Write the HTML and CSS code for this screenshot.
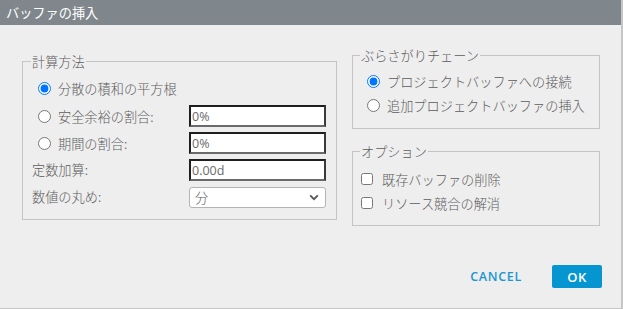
FILE: index.html
```html
<!DOCTYPE html>
<html lang="ja">
<head>
<meta charset="UTF-8" />
<meta name="viewport" content="width=device-width, initial-scale=1" />
<title>バッファの挿入</title>
<link rel="stylesheet" href="styles.css">
</head>
<body>
<div class="dialog" role="dialog" aria-label="バッファの挿入">
  <header class="dialog-title">バッファの挿入</header>

  <div class="dialog-body">
    <div class="col col-left">
      <fieldset class="group">
        <legend>計算方法</legend>
        <div class="rows">
          <label class="row row-first">
            <input type="radio" name="calc" checked>
            <span>分散の積和の平方根</span>
          </label>
          <div class="row">
            <label class="opt"><input type="radio" name="calc"><span>安全余裕の割合:</span></label>
            <input class="field" type="text" value="0%">
          </div>
          <div class="row">
            <label class="opt"><input type="radio" name="calc"><span>期間の割合:</span></label>
            <input class="field" type="text" value="0%">
          </div>
          <div class="row">
            <span class="plain">定数加算:</span>
            <input class="field" type="text" value="0.00d">
          </div>
          <div class="row">
            <span class="plain">数値の丸め:</span>
            <div class="select" role="combobox" aria-expanded="false">
              <span>分</span>
              <svg width="10" height="7" viewBox="0 0 10 7" aria-hidden="true">
                <path d="M1.2 1.4 L5 5.2 L8.8 1.4" fill="none" stroke="#555" stroke-width="1.8"/>
              </svg>
            </div>
          </div>
        </div>
      </fieldset>
    </div>

    <div class="col col-right">
      <fieldset class="group group-chain">
        <legend>ぶらさがりチェーン</legend>
        <div class="rows rows-tight">
          <label class="row opt"><input type="radio" name="chain" checked><span>プロジェクトバッファへの接続</span></label>
          <label class="row opt"><input type="radio" name="chain"><span>追加プロジェクトバッファの挿入</span></label>
        </div>
      </fieldset>

      <fieldset class="group group-options">
        <legend>オプション</legend>
        <div class="rows rows-tight">
          <label class="row opt"><input type="checkbox"><span>既存バッファの削除</span></label>
          <label class="row opt"><input type="checkbox"><span>リソース競合の解消</span></label>
        </div>
      </fieldset>
    </div>
  </div>

  <footer class="dialog-actions">
    <button type="button" class="btn-text">CANCEL</button>
    <button type="button" class="btn-primary">OK</button>
  </footer>
</div>
</body>
</html>
```

FILE: styles.css
```css
/* Base */
* {
  box-sizing: border-box;
}
html, body {
  margin: 0;
  padding: 0;
  height: 100%;
}
body {
  background: #c6c6c6;
  font-family: "Noto Sans CJK JP", sans-serif;
  font-weight: 300;
  font-size: 13.2px;
  color: #5c5c5c;
  overflow: hidden;
}

/* Dialog shell */
.dialog {
  width: 621px;
  height: 308px;
  background: #eeeeee;
  display: flex;
  flex-direction: column;
}
.dialog-title {
  height: 25px;
  background: #7f878c;
  color: #fff;
  font-size: 13.2px;
  font-weight: 400;
  line-height: 25px;
  padding: 0 6px;
}

/* Two columns */
.dialog-body {
  display: grid;
  grid-template-columns: 315px 248px;
  gap: 15px;
  padding: 22px 0 0 22px;
}
.col-left {
  padding-top: 6px;
}
.col-right {
  display: flex;
  flex-direction: column;
  gap: 14px;
}

/* Group boxes */
.group {
  margin: 0;
  border: 1px solid #c4c4c4;
  padding: 7px 9px 11px 9px;
  min-width: 0;
}
.group legend {
  padding: 0 1px;
  margin-left: -1px;
  line-height: 17px;
}
.group-chain,
.group-options {
  padding: 6px 8px 12px 8px;
}
.group-options {
  padding-top: 8px;
  padding-bottom: 11px;
}

.rows {
  display: flex;
  flex-direction: column;
  gap: 5px;
}
.rows-tight {
  gap: 2px;
}
.row {
  height: 22px;
  display: flex;
  align-items: center;
}
.row-first {
  height: 23px;
}
.col-left .row {
  display: grid;
  grid-template-columns: 157px 137px;
  align-items: center;
}
.col-left .row-first {
  display: flex;
}

.opt {
  display: flex;
  align-items: center;
}
.plain {
  line-height: 22px;
}

/* Radios and checkboxes */
input[type="radio"] {
  width: 13px;
  height: 13px;
  margin: 0 7px 0 6px;
  accent-color: #0075ff;
}
input[type="checkbox"] {
  width: 12px;
  height: 12px;
  margin: 0 9px 0 0;
}

/* Text fields */
.field {
  height: 22px;
  width: 137px;
  margin: 0;
  padding: 0 1px;
  background: #fff;
  border: 2px solid #1f1f1f;
  border-bottom-color: #6a6a6a;
  border-right-color: #3a3a3a;
  font-family: "Open Sans", "Noto Sans CJK JP", sans-serif;
  font-weight: 400;
  font-size: 12.5px;
  color: #6a6a6a;
  outline: none;
}

.select {
  height: 21px;
  width: 137px;
  background: #fff;
  border: 1px solid #b4b4b4;
  border-radius: 3px;
  display: flex;
  align-items: center;
  justify-content: space-between;
  padding: 0 6px 0 5px;
}

/* Action bar */
.dialog-actions {
  margin-top: auto;
  display: flex;
  justify-content: flex-end;
  align-items: center;
  gap: 30px;
  padding: 0 19px 20px 0;
}
.btn-text {
  background: none;
  border: none;
  padding: 0;
  font-family: "Open Sans", sans-serif;
  font-weight: 600;
  font-size: 12.5px;
  letter-spacing: 0.7px;
  color: #1a96d2;
  cursor: pointer;
}
.btn-primary {
  width: 50px;
  height: 23px;
  border: none;
  border-radius: 2px;
  background: #0596d2;
  color: #fff;
  font-family: "Open Sans", sans-serif;
  font-weight: 600;
  font-size: 13px;
  letter-spacing: 0.4px;
  padding: 0;
  cursor: pointer;
}
```
